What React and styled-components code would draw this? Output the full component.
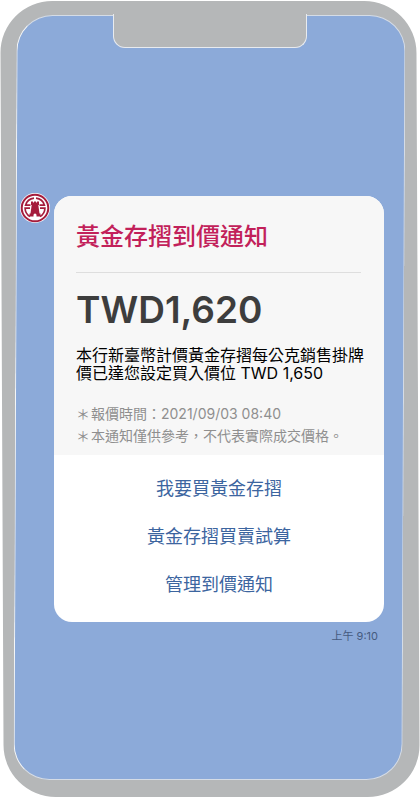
import React from "react";
import styled, { createGlobalStyle } from "styled-components";

const GlobalStyle = createGlobalStyle`
  * { box-sizing: border-box; }
  body {
    margin: 0;
    background: #fff;
    font-family: Inter, "Noto Sans CJK TC", sans-serif;
  }
`;

const Phone = styled.main`
  position: relative;
  isolation: isolate;
  min-height: 100vh;
  padding: 193px 36px 150px 20px;

  &::before,
  &::after {
    content: "";
    position: absolute;
    z-index: -1;
  }
  &::before {
    inset: 1px 2px 0;
    border-radius: 52px;
    background: #b5b7b8;
    transform: skewX(0.25deg);
  }
  &::after {
    inset: 15px 16px 17px 15px;
    border: 1px solid #d5dce6;
    border-left-color: #f4f6f8;
    border-radius: 36px;
    background: #8caad9;
    transform: skewX(-0.23deg);
  }
`;

const Notch = styled.div`
  position: absolute;
  top: 14px;
  left: 27%;
  right: 27%;
  height: 34px;
  border: 1px solid #e8ebef;
  border-top: 0;
  border-radius: 0 0 12px 12px;
  background: #b5b7b8;
`;

const Message = styled.article`
  display: grid;
  grid-template-columns: 30px 1fr;
  column-gap: 4px;
  align-items: start;
`;

const Logo = styled.svg`
  width: 30px;
  height: 30px;
`;

const Card = styled.section`
  margin-top: 3px;
  overflow: hidden;
  border-radius: 18px;
  background: #fff;
`;

const Summary = styled.div`
  padding: 23px 18px 8px 22px;
  background: #f7f7f7;
`;

const Title = styled.h1`
  margin: 0;
  padding-bottom: 17px;
  margin-right: 5px;
  border-bottom: 1px solid #dedede;
  color: #c2215a;
  font-size: 24px;
  font-weight: 500;
  line-height: 36px;
`;

const Amount = styled.p`
  margin: 14px 0 13px;
  color: #3d3d3d;
  font-size: 37px;
  font-weight: 600;
  line-height: 46px;
`;

const Description = styled.p`
  margin: 0;
  color: #000;
  font-size: 16px;
  line-height: 18px;
`;

const Notes = styled.ul`
  margin: 21px 0 0;
  padding: 0;
  list-style: none;
  color: #8f8f8f;
  font-size: 14px;
  line-height: 22px;
`;

const Note = styled.li`
  display: flex;
  gap: 1px;
  white-space: nowrap;
`;

const Actions = styled.nav`
  display: grid;
  gap: 12px;
  padding: 16px 22px 19px;
`;

const Action = styled.button`
  padding: 0;
  border: 0;
  background: none;
  color: #3c659f;
  font: inherit;
  font-size: 18px;
  line-height: 36px;
  cursor: pointer;
`;

const Time = styled.time`
  grid-column: 2;
  justify-self: end;
  padding: 6px 6px 0 0;
  color: #455b80;
  font-size: 11px;
  line-height: 16px;
`;

function BankLogo() {
  return (
    <Logo viewBox="0 0 30 30" role="img" aria-label="銀行">
      <circle cx="15" cy="15" r="15" fill="#fff" />
      <g fill="none" stroke="#a51c3c">
        <circle cx="15" cy="15" r="13.3" strokeWidth="2" />
        <path
          strokeWidth="1.7"
          d="M14 5.200A9.900 9.900 0 0 0 5.600 12.200H10.500M16 5.200A9.900 9.900 0 0 1 24.400 12.200H19.500M10 15.200H5.100A9.900 9.900 0 0 0 10 23.500M20 15.200H24.900A9.900 9.900 0 0 1 20 23.500"
        />
      </g>
      <path
        fill="#a51c3c"
        d="M11 8.500H13V9.500H14V8.500H16V9.500H17V8.500H19V12H18.300L19.500 20.500H20.500V23.500H16.500V22A1.500 1.500 0 0 0 13.500 22V23.500H9.500V20.500H10.500L11.700 12H11Z"
      />
    </Logo>
  );
}

const notes = ["報價時間：2021/09/03 08:40", "本通知僅供參考，不代表實際成交價格。"];
const actions = ["我要買黃金存摺", "黃金存摺買賣試算", "管理到價通知"];

export default function App() {
  return (
    <>
      <GlobalStyle />
      <Phone lang="zh-Hant">
        <Notch />
        <Message>
          <BankLogo />
          <Card>
            <Summary>
              <Title>黃金存摺到價通知</Title>
              <Amount>TWD1,620</Amount>
              <Description>本行新臺幣計價黃金存摺每公克銷售掛牌價已達您設定買入價位 TWD 1,650</Description>
              <Notes>
                {notes.map((note) => (
                  <Note key={note}>
                    <span>＊</span>
                    <span>{note}</span>
                  </Note>
                ))}
              </Notes>
            </Summary>
            <Actions>
              {actions.map((label) => (
                <Action key={label} type="button">{label}</Action>
              ))}
            </Actions>
          </Card>
          <Time dateTime="09:10">上午 9:10</Time>
        </Message>
      </Phone>
    </>
  );
}
